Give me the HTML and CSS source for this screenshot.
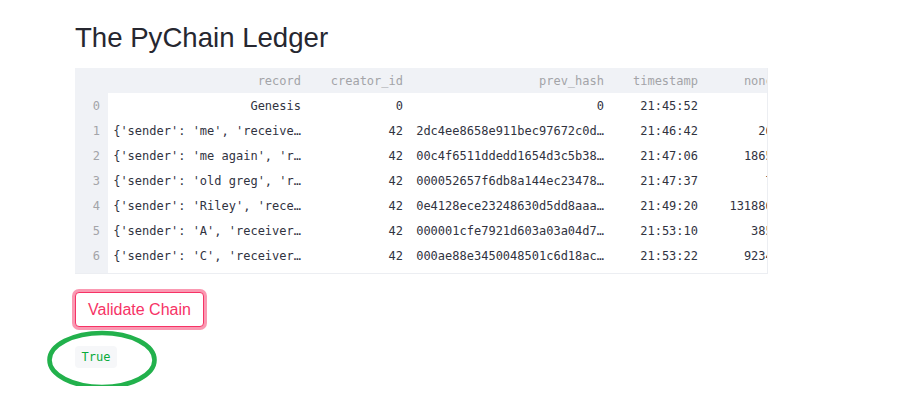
FILE: index.html
```html
<!DOCTYPE html>
<html lang="en">
<head>
<meta charset="utf-8">
<title>The PyChain Ledger</title>
<link rel="stylesheet" href="styles.css">
</head>
<body>
<main class="page">
  <h1 class="title">The PyChain Ledger</h1>
  <div class="frame">
    <table class="df">
      <colgroup>
        <col class="c-idx"><col class="c-rec"><col class="c-cre"><col class="c-hash"><col class="c-ts"><col class="c-non">
      </colgroup>
      <thead>
        <tr><th class="idx"></th><th>record</th><th>creator_id</th><th>prev_hash</th><th>timestamp</th><th>nonce</th></tr>
      </thead>
      <tbody>
        <tr><th class="idx">0</th><td>Genesis</td><td>0</td><td>0</td><td>21:45:52</td><td>0</td></tr>
        <tr><th class="idx">1</th><td>{'sender': 'me', 'receive…</td><td>42</td><td>2dc4ee8658e911bec97672c0d…</td><td>21:46:42</td><td>269</td></tr>
        <tr><th class="idx">2</th><td>{'sender': 'me again', 'r…</td><td>42</td><td>00c4f6511ddedd1654d3c5b38…</td><td>21:47:06</td><td>18652</td></tr>
        <tr><th class="idx">3</th><td>{'sender': 'old greg', 'r…</td><td>42</td><td>000052657f6db8a144ec23478…</td><td>21:47:37</td><td>76</td></tr>
        <tr><th class="idx">4</th><td>{'sender': 'Riley', 'rece…</td><td>42</td><td>0e4128ece23248630d5dd8aaa…</td><td>21:49:20</td><td>1318864</td></tr>
        <tr><th class="idx">5</th><td>{'sender': 'A', 'receiver…</td><td>42</td><td>000001cfe7921d603a03a04d7…</td><td>21:53:10</td><td>3852</td></tr>
        <tr><th class="idx">6</th><td>{'sender': 'C', 'receiver…</td><td>42</td><td>000ae88e3450048501c6d18ac…</td><td>21:53:22</td><td>92341</td></tr>
      </tbody>
    </table>
  </div>
  <button class="btn" type="button">Validate Chain</button>
  <div class="result">
    <code class="code">True</code>
    <svg class="circle" width="120" height="70" viewBox="0 0 120 70" aria-hidden="true">
      <ellipse cx="58" cy="33" rx="52.5" ry="27" fill="none" stroke="#22b14c" stroke-width="4.6"/>
    </svg>
  </div>
</main>
</body>
</html>
```

FILE: styles.css
```css
* { box-sizing: border-box; }

body {
  margin: 0;
  background: #ffffff;
  font-family: "Liberation Sans", Arial, sans-serif;
  color: #262730;
}

.page {
  padding: 21px 0 0 75px;
}

.title {
  margin: 0 0 14px 0;
  font-size: 27.6px;
  line-height: 33px;
  font-weight: 400;
  color: #262730;
}

.frame {
  width: 693px;
  overflow: hidden;
  padding-bottom: 5px;
  border-right: 1px solid #eceef2;
  border-bottom: 1px solid #eceef2;
  background: linear-gradient(to right, #f0f2f6 33px, #ffffff 33px);
}

.df {
  border-collapse: collapse;
  table-layout: fixed;
  width: 713px;
  font-family: "DejaVu Sans Mono", "Liberation Mono", monospace;
  font-size: 12px;
  color: #31333f;
}

.c-idx { width: 33px; }
.c-rec { width: 201px; }
.c-cre { width: 102px; }
.c-hash { width: 201px; }
.c-ts { width: 94px; }
.c-non { width: 82px; }

.df th,
.df td {
  padding: 0 8px 0 0;
  text-align: right;
  white-space: nowrap;
  overflow: hidden;
  font-weight: 400;
}

.df thead th {
  height: 25px;
  background: #f0f2f6;
  color: #a3a4a8;
}

.df tbody td,
.df tbody th {
  height: 25px;
}

.df tbody td {
  background: #ffffff;
}

.df .idx {
  background: #f0f2f6;
  color: #a3a4a8;
}

.btn {
  display: block;
  margin-top: 18px;
  height: 35px;
  padding: 0 12px;
  border: 1px solid #f63366;
  border-radius: 4px;
  background: #ffffff;
  color: #f63366;
  font-family: "Liberation Sans", Arial, sans-serif;
  font-size: 16px;
  line-height: 33px;
  box-shadow: 0 0 0 3px rgba(246, 51, 102, 0.5);
}

.result {
  position: relative;
  margin-top: 19px;
  height: 40px;
}

.code {
  display: inline-block;
  height: 22px;
  padding: 0 6.5px;
  border-radius: 4px;
  background: #f6f7f9;
  color: #09ab3b;
  font-family: "DejaVu Sans Mono", "Liberation Mono", monospace;
  font-size: 12px;
  line-height: 22px;
}

.circle {
  position: absolute;
  left: -31px;
  top: -19px;
}
```
